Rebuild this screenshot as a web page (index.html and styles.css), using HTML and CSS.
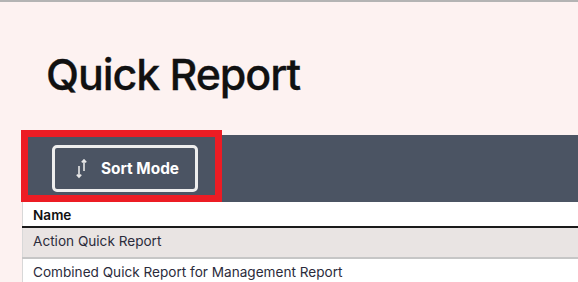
FILE: index.html
```html
<!DOCTYPE html>
<html lang="en">
<head>
    <meta charset="UTF-8">
    <meta name="viewport" content="width=device-width, initial-scale=1.0">
    <title>Quick Report</title>
    <link rel="stylesheet" href="styles.css">
</head>
<body>
    <div class="page">
        <h1 class="page-title">Quick Report</h1>

        <div class="report-panel">
            <div class="toolbar">
                <button class="sort-btn">
                    <svg class="sort-icon" width="14" height="20" viewBox="0 0 14 20">
                        <path d="M4 7v11M1.8 15.6L4 18l2.2-2.4" fill="none" stroke="#e8e8e8" stroke-width="1.6"/>
                        <path d="M9 12V1M6.8 3.4L9 1l2.2 2.4" fill="none" stroke="#e8e8e8" stroke-width="1.6"/>
                    </svg>
                    Sort Mode
                </button>
                <div class="highlight"></div>
            </div>

            <table class="report-table">
                <thead>
                    <tr><th>Name</th></tr>
                </thead>
                <tbody>
                    <tr class="alt"><td>Action Quick Report</td></tr>
                    <tr><td>Combined Quick Report for Management Report</td></tr>
                </tbody>
            </table>
        </div>
    </div>
</body>
</html>
```

FILE: styles.css
```css
body {
    margin: 0;
    padding: 0;
    font-family: 'Inter', sans-serif;
    background: #fdf2f1;
    color: #222;
    overflow: hidden;
}

.page {
    border-top: 2px solid #b4b4b4;
    min-height: 280px;
}

.page-title {
    margin: 0;
    padding: 45px 0 0 46px;
    height: 86px;
    box-sizing: border-box;
    font-size: 43px;
    font-weight: 500;
    line-height: 54px;
    color: #111;
    letter-spacing: -1.1px;
    -webkit-text-stroke: 0.3px #111;
}

.report-panel {
    margin-left: 22px;
    margin-top: 47px;
    background: #fff;
}

.toolbar {
    position: relative;
    height: 67px;
    background: #4b5463;
    padding: 10px 0 0 30px;
    box-sizing: border-box;
}

.sort-btn {
    display: flex;
    align-items: center;
    gap: 12px;
    width: 146px;
    height: 47px;
    padding: 0 0 0 20px;
    box-sizing: border-box;
    background: transparent;
    border: 3px solid #eeeeee;
    border-radius: 5px;
    color: #fff;
    font-family: 'Inter', sans-serif;
    font-size: 15.4px;
    font-weight: 700;
    cursor: pointer;
}

.sort-icon {
    flex: none;
}

.highlight {
    position: absolute;
    left: -1px;
    top: -5px;
    width: 201px;
    height: 72px;
    box-sizing: border-box;
    border: 7px solid #ec1c24;
    pointer-events: none;
}

.report-table {
    width: 100%;
    border-collapse: collapse;
    border-left: 1px solid #d8d8d8;
    font-size: 13.6px;
}

.report-table th {
    text-align: left;
    font-weight: 600;
    height: 23px;
    padding: 1px 10px 0;
    border-bottom: 2px solid #1a1a1a;
    color: #111;
}

.report-table td {
    height: 26px;
    padding: 0 10px 3px;
    border-bottom: 2px solid #c6c6c6;
    color: #2b2b3b;
}

.report-table tr.alt td {
    background: #e9e4e3;
}
```
